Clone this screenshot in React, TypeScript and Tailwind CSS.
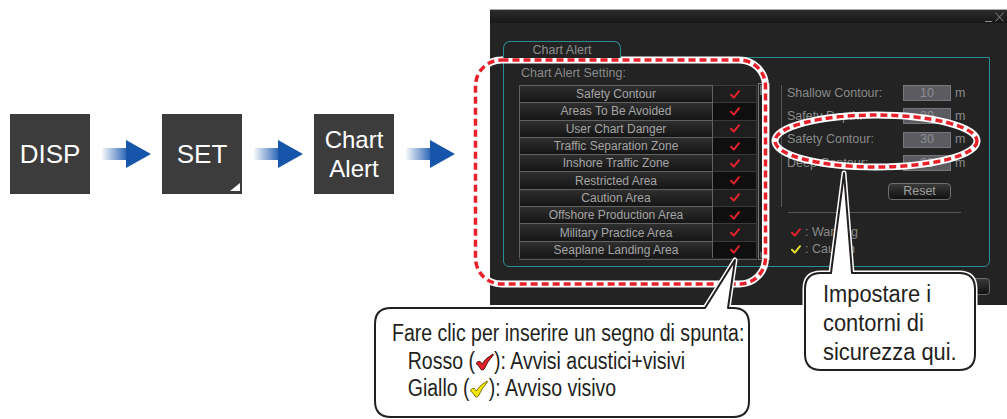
import React from 'react';

type Item = { label: string };

const alertItems: Item[] = [
  { label: 'Safety Contour' },
  { label: 'Areas To Be Avoided' },
  { label: 'User Chart Danger' },
  { label: 'Traffic Separation Zone' },
  { label: 'Inshore Traffic Zone' },
  { label: 'Restricted Area' },
  { label: 'Caution Area' },
  { label: 'Offshore Production Area' },
  { label: 'Military Practice Area' },
  { label: 'Seaplane Landing Area' },
];

const depthRows = [
  { label: 'Shallow Contour:', value: '10' },
  { label: 'Safety Depth:', value: '20' },
  { label: 'Safety Contour:', value: '30' },
  { label: 'Deep Contour:', value: '30' },
];

const SmallCheck = ({ color }: { color: string }) => (
  <svg width="10" height="9" viewBox="0 0 10 9" className="block">
    <path d="M1 4.8 L3.8 7.6 L9 1.2" fill="none" stroke={color} strokeWidth="2" strokeLinecap="round" strokeLinejoin="round" />
  </svg>
);

// bold brush-style tick used in the callout (drawn wide, the text block is squeezed)
const BigCheck = ({ fill, stroke }: { fill: string; stroke: string }) => (
  <svg width="23" height="18" viewBox="0 0 20 18" preserveAspectRatio="none" className="inline-block align-[-2px]">
    <path
      d="M1 10.5 Q3.2 7.6 5.2 8.4 Q6.4 9.2 7.4 11 Q11 5 18.8 1 Q19.4 1.6 18.9 2.4 Q13 8.4 9.6 16.2 Q8.4 17.4 6.6 16.8 Q4.4 13 1 10.5 Z"
      fill={fill}
      stroke={stroke}
      strokeWidth="0.9"
      strokeLinejoin="round"
    />
  </svg>
);

const Arrow = () => (
  <svg width="50" height="28" viewBox="0 0 50 28" className="block shrink-0">
    <defs>
      <linearGradient id="shaft" x1="0" x2="1" y1="0" y2="0">
        <stop offset="0" stopColor="#ffffff" />
        <stop offset="1" stopColor="#2a63b4" />
      </linearGradient>
    </defs>
    <rect x="0" y="8" width="26" height="12" fill="url(#shaft)" />
    <polygon points="25,0 50,14 25,28" fill="#1655a9" />
  </svg>
);

const KeyBox = ({ children, corner }: { children: React.ReactNode; corner?: boolean }) => (
  <div className="relative flex h-[80px] w-[80px] shrink-0 flex-col items-center justify-center bg-[#3c3c3c] text-white">
    {children}
    {corner && (
      <svg width="10" height="8" viewBox="0 0 10 8" className="absolute bottom-[3px] right-[2px]">
        <polygon points="10,0 10,8 0,8" fill="#ffffff" />
      </svg>
    )}
  </div>
);

const ChartAlertPanel = () => (
  <div className="ml-[35px] mt-[9px] flex h-[296px] w-[517px] shrink-0 flex-col bg-[#222322] text-[12px] text-[#8c8c8c]">
    <div className="flex h-[14px] items-center justify-end gap-[3px] border-t border-[#a9a9a9] bg-gradient-to-b from-[#2c2c2c] to-[#171717] pr-[3px]">
      <span className="mt-[9px] h-px w-[7px] bg-[#8a8a8a]" />
      <svg width="9" height="10" viewBox="0 0 9 10" className="block">
        <path d="M0.5 0.5 L8.5 9.5 M8.5 0.5 L0.5 9.5" stroke="#8a8a8a" strokeWidth="1" />
      </svg>
    </div>
    <div className="flex-1 pl-[13px] pr-[17px] pt-[18px]">
      <div className="relative z-10 -mb-px flex h-[17px] w-[118px] items-center justify-center rounded-t-[7px] border border-b-0 border-[#2a8d94] bg-[#222322] text-[12.5px] text-[#8e8e8e]">
        Chart Alert
      </div>
      <div className="flex h-[210px] rounded-b-[6px] border border-[#2a8d94]">
        <div className="ml-[15px] flex flex-col">
          <div className="mt-[6px] h-[18px] pl-[2px] text-[12.5px] leading-[18px] text-[#8a8a8a]">Chart Alert Setting:</div>
          <div className="mt-[3px] flex">
            <div className="flex w-[238px] flex-col border-b border-[#5a5a5a]">
              {alertItems.map((item, i) => (
                <div key={item.label} className="flex h-[17.3px]">
                  <div className="flex w-[194px] items-center justify-center border-x border-t border-[#626262] bg-gradient-to-b from-[#2f2f2f] to-[#151515] text-[12px] leading-none text-[#a4a4a4]">
                    {item.label}
                  </div>
                  <div
                    className={`flex flex-1 items-center justify-center border-r border-t border-[#3a3a3a] ${
                      i % 2 === 0 ? 'bg-[#1e1e1e]' : 'bg-[#0f0f0f]'
                    }`}
                  >
                    <SmallCheck color="#e3232c" />
                  </div>
                </div>
              ))}
            </div>
            <div className="-mt-[2px] ml-px flex h-[177px] w-[12px] flex-col justify-between border border-[#7a7a7a] bg-[#1b1b1b] p-px">
              <div className="h-[10px] bg-[#6a6a6a]" />
              <div className="h-[6px] bg-[#555]" />
            </div>
          </div>
        </div>
        <div className="ml-[11px] mt-[27px] flex flex-col">
          <div className="flex h-[122px] flex-col border-l border-[#575757] pl-[5px]">
            <div className="flex flex-col gap-[7.3px]">
              {depthRows.map((row) => (
                <div key={row.label} className="flex h-[16px] items-center">
                  <span className="w-[116px] text-[12.5px] text-[#8a8a8a]">{row.label}</span>
                  <span className="flex h-[16px] w-[48px] items-center justify-center border border-[#77777b] bg-[#5c5c60] text-[12.5px] text-[#8e8e92]">
                    {row.value}
                  </span>
                  <span className="ml-[4px] text-[12.5px] text-[#8a8a8a]">m</span>
                </div>
              ))}
            </div>
            <div className="ml-[101px] mt-[12px] flex h-[17px] w-[63px] items-center justify-center rounded-[4px] border border-[#6e6e6e] bg-gradient-to-b from-[#3a3a3a] to-[#111] text-[12.5px] text-[#a0a0a0]">
              Reset
            </div>
          </div>
          <div className="ml-[7px] mt-[5px] h-px w-[173px] bg-[#575757]" />
          <div className="ml-[10px] mt-[11px] flex flex-col">
            <div className="flex h-[17px] items-center gap-[4px]">
              <SmallCheck color="#e3232c" />
              <span className="text-[12.5px] text-[#8a8a8a]">: Warning</span>
            </div>
            <div className="flex h-[17px] items-center gap-[4px]">
              <SmallCheck color="#e6e02c" />
              <span className="text-[12.5px] text-[#8a8a8a]">: Caution</span>
            </div>
          </div>
        </div>
      </div>
      <div className="mt-[11px] flex justify-end">
        <div className="h-[17px] w-[70px] rounded-[4px] border border-[#6a6a6a] bg-gradient-to-b from-[#3a3a3a] to-[#111]" />
      </div>
    </div>
  </div>
);

const bubbleLeft =
  'M391 308 L705 308 L735 260 L728 308 L733 308 Q749 308 749 324 L749 401 Q749 417 733 417 L391 417 Q375 417 375 401 L375 324 Q375 308 391 308 Z';
const bubbleRight =
  'M821 273 L831 273 L844 173 L852 273 L959 273 Q975 273 975 289 L975 354 Q975 370 959 370 L821 370 Q805 370 805 354 L805 289 Q805 273 821 273 Z';

const Overlays = () => (
  <svg width="1007" height="419" viewBox="0 0 1007 419" className="pointer-events-none absolute left-0 top-0">
    <rect x="475.5" y="60" width="290" height="224" rx="26" fill="none" stroke="#ffffff" strokeWidth="7" />
    <rect x="475.5" y="60" width="290" height="224" rx="26" fill="none" stroke="#e8202a" strokeWidth="3.5" strokeDasharray="7 4" />
    <ellipse cx="876" cy="141" rx="101" ry="26" fill="none" stroke="#ffffff" strokeWidth="7" />
    <ellipse cx="876" cy="141" rx="101" ry="26" fill="none" stroke="#e8202a" strokeWidth="3.5" strokeDasharray="7 4" />
    <path d={bubbleLeft} fill="#ffffff" stroke="#ffffff" strokeWidth="5" strokeLinejoin="round" />
    <path d={bubbleLeft} fill="#ffffff" stroke="#231f20" strokeWidth="2" strokeLinejoin="round" />
    <path d={bubbleRight} fill="#ffffff" stroke="#ffffff" strokeWidth="5" strokeLinejoin="round" />
    <path d={bubbleRight} fill="#ffffff" stroke="#231f20" strokeWidth="2" strokeLinejoin="round" />
  </svg>
);

export default function App() {
  return (
    <div className="relative h-[419px] w-[1007px] overflow-hidden bg-white font-['Liberation_Sans',Arial,sans-serif]">
      <div className="flex items-start">
        <div className="ml-[10px] mt-[114px] flex items-center gap-[11px]">
          <KeyBox>
            <span className="text-[26px] leading-none">DISP</span>
          </KeyBox>
          <Arrow />
          <KeyBox corner>
            <span className="text-[26px] leading-none">SET</span>
          </KeyBox>
          <Arrow />
          <KeyBox>
            <span className="text-[24px] leading-[29px]">Chart</span>
            <span className="text-[24px] leading-[29px]">Alert</span>
          </KeyBox>
          <Arrow />
        </div>
        <ChartAlertPanel />
      </div>

      <Overlays />

      <div className="absolute left-[392px] top-[320px] origin-left scale-x-[0.83] whitespace-nowrap text-[23.5px] leading-[27.5px] text-[#231f20]">
        <div>Fare clic per inserire un segno di spunta:</div>
        <div className="pl-[19px]">
          Rosso (<BigCheck fill="#e3202a" stroke="#3a0a0a" />): Avvisi acustici+visivi
        </div>
        <div className="pl-[19px]">
          Giallo (<BigCheck fill="#f6e600" stroke="#6a5e00" />): Avviso visivo
        </div>
      </div>

      <div className="absolute left-[823px] top-[280px] origin-left scale-x-[0.93] whitespace-nowrap text-[23.5px] leading-[29px] text-[#231f20]">
        <div>Impostare i</div>
        <div>contorni di</div>
        <div>sicurezza qui.</div>
      </div>
    </div>
  );
}
